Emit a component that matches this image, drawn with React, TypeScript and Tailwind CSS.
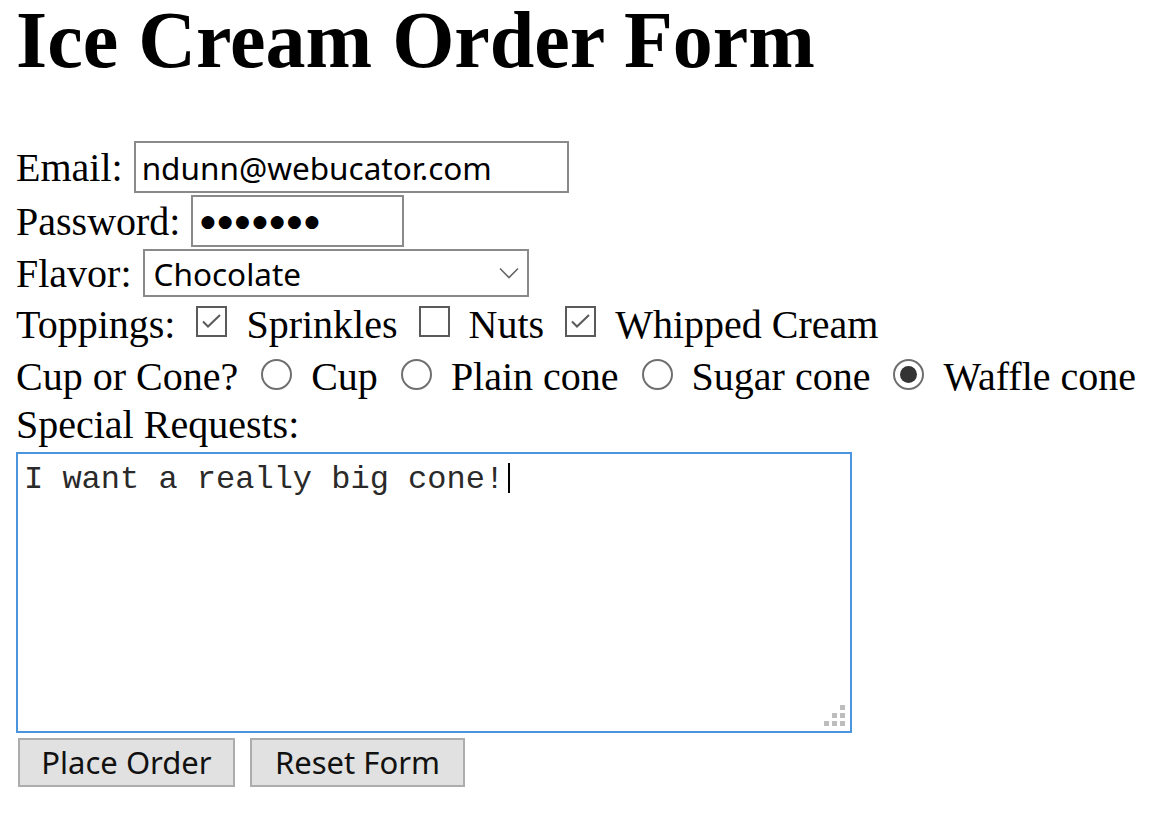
import React from "react";

const serif = "font-['Liberation_Serif','Times_New_Roman',serif]";
const ui = "font-['Noto_Sans','Segoe_UI',sans-serif]";

const Checkbox: React.FC<{ checked?: boolean }> = ({ checked }) => (
  <span className="ml-[21px] mb-[6px] flex h-[31px] w-[31px] shrink-0 items-center justify-center border-2 border-[#5a5a5a] bg-white">
    {checked && (
      <svg width="27" height="27" viewBox="0 0 27 27" fill="none">
        <path d="M5 13.5l5 5L22 7" stroke="#5a5a5a" strokeWidth="2" />
      </svg>
    )}
  </span>
);

const Radio: React.FC<{ checked?: boolean }> = ({ checked }) => (
  <span className="ml-[23px] mb-[5px] flex h-[31px] w-[31px] shrink-0 items-center justify-center rounded-full border-2 border-[#6f6f6f] bg-white">
    {checked && <span className="h-[17px] w-[17px] rounded-full bg-[#333]" />}
  </span>
);

const Choice: React.FC<{ label: string; checked?: boolean; radio?: boolean }> = ({ label, checked, radio }) => (
  <>
    {radio ? <Radio checked={checked} /> : <Checkbox checked={checked} />}
    <span className="ml-[19px] whitespace-nowrap">{label}</span>
  </>
);

export default function App() {
  return (
    <div className={`min-h-[814px] w-[1166px] bg-white pl-[16px] text-black ${serif}`}>
      <h1 className="mb-[61px] text-[80px] font-bold leading-[80px]">Ice Cream Order Form</h1>

      <form className="flex flex-col text-[40px] leading-[45px]">
        <div className="flex h-[52px] items-center">
          <span>Email:</span>
          <div className={`ml-[11px] flex h-[52px] w-[435px] items-center border-2 border-[#8a8a8a] px-[6px] text-[31.5px] ${ui}`}>
            ndunn@webucator.com
          </div>
        </div>

        <div className="mt-[2px] flex h-[52px] items-center">
          <span>Password:</span>
          <div className="ml-[11px] flex h-[52px] w-[213px] items-center border-2 border-[#8a8a8a] pl-[7px] font-['DejaVu_Sans',sans-serif] text-[17px] tracking-[2.5px]">
            ●●●●●●●
          </div>
        </div>

        <div className="mt-[2px] flex h-[48px] items-center">
          <span>Flavor:</span>
          <div className={`ml-[11px] flex h-[48px] w-[386px] items-center justify-between border-2 border-[#8a8a8a] pl-[9px] pr-[8px] text-[31.5px] ${ui}`}>
            <span>Chocolate</span>
            <svg width="20" height="12" viewBox="0 0 20 12" fill="none">
              <path d="M1 1.5l9 9 9-9" stroke="#666" strokeWidth="1.6" />
            </svg>
          </div>
        </div>

        <div className="mt-[5px] flex h-[45px] items-center">
          <span>Toppings:</span>
          <Choice label="Sprinkles" checked />
          <Choice label="Nuts" />
          <Choice label="Whipped Cream" checked />
        </div>

        <div className="mt-[7px] flex h-[45px] items-center">
          <span>Cup or Cone?</span>
          <Choice radio label="Cup" />
          <Choice radio label="Plain cone" />
          <Choice radio label="Sugar cone" />
          <Choice radio checked label="Waffle cone" />
        </div>

        <div className="mt-[3px] flex h-[45px] items-center">
          <span>Special Requests:</span>
        </div>

        <div className="relative mt-[5px] h-[281px] w-[836px] border-2 border-[#4a95de] bg-white px-[6px] pt-[4px] font-['Liberation_Mono','Courier_New',monospace] text-[32px] leading-[36px] text-[#2a2a2a]">
          <span>I want a really big cone!</span>
          <span className="ml-[4px] inline-block h-[30px] w-[2px] translate-y-[5px] bg-black" />
          <div className="absolute bottom-[5px] right-[5px] grid grid-cols-3 gap-[3px]">
            <span className="h-[5px] w-[5px]" />
            <span className="h-[5px] w-[5px]" />
            <span className="h-[5px] w-[5px] bg-[#bdbdbd]" />
            <span className="h-[5px] w-[5px]" />
            <span className="h-[5px] w-[5px] bg-[#bdbdbd]" />
            <span className="h-[5px] w-[5px] bg-[#bdbdbd]" />
            <span className="h-[5px] w-[5px] bg-[#bdbdbd]" />
            <span className="h-[5px] w-[5px] bg-[#bdbdbd]" />
            <span className="h-[5px] w-[5px] bg-[#bdbdbd]" />
          </div>
        </div>

        <div className={`mt-[5px] flex gap-[15px] pl-[2px] text-[31px] ${ui}`}>
          <button type="button" className="flex h-[49px] w-[217px] items-center justify-center border-2 border-[#adadad] bg-[#e1e1e1] text-[#111]">
            Place Order
          </button>
          <button type="button" className="flex h-[49px] w-[215px] items-center justify-center border-2 border-[#adadad] bg-[#e1e1e1] text-[#111]">
            Reset Form
          </button>
        </div>
      </form>
    </div>
  );
}
